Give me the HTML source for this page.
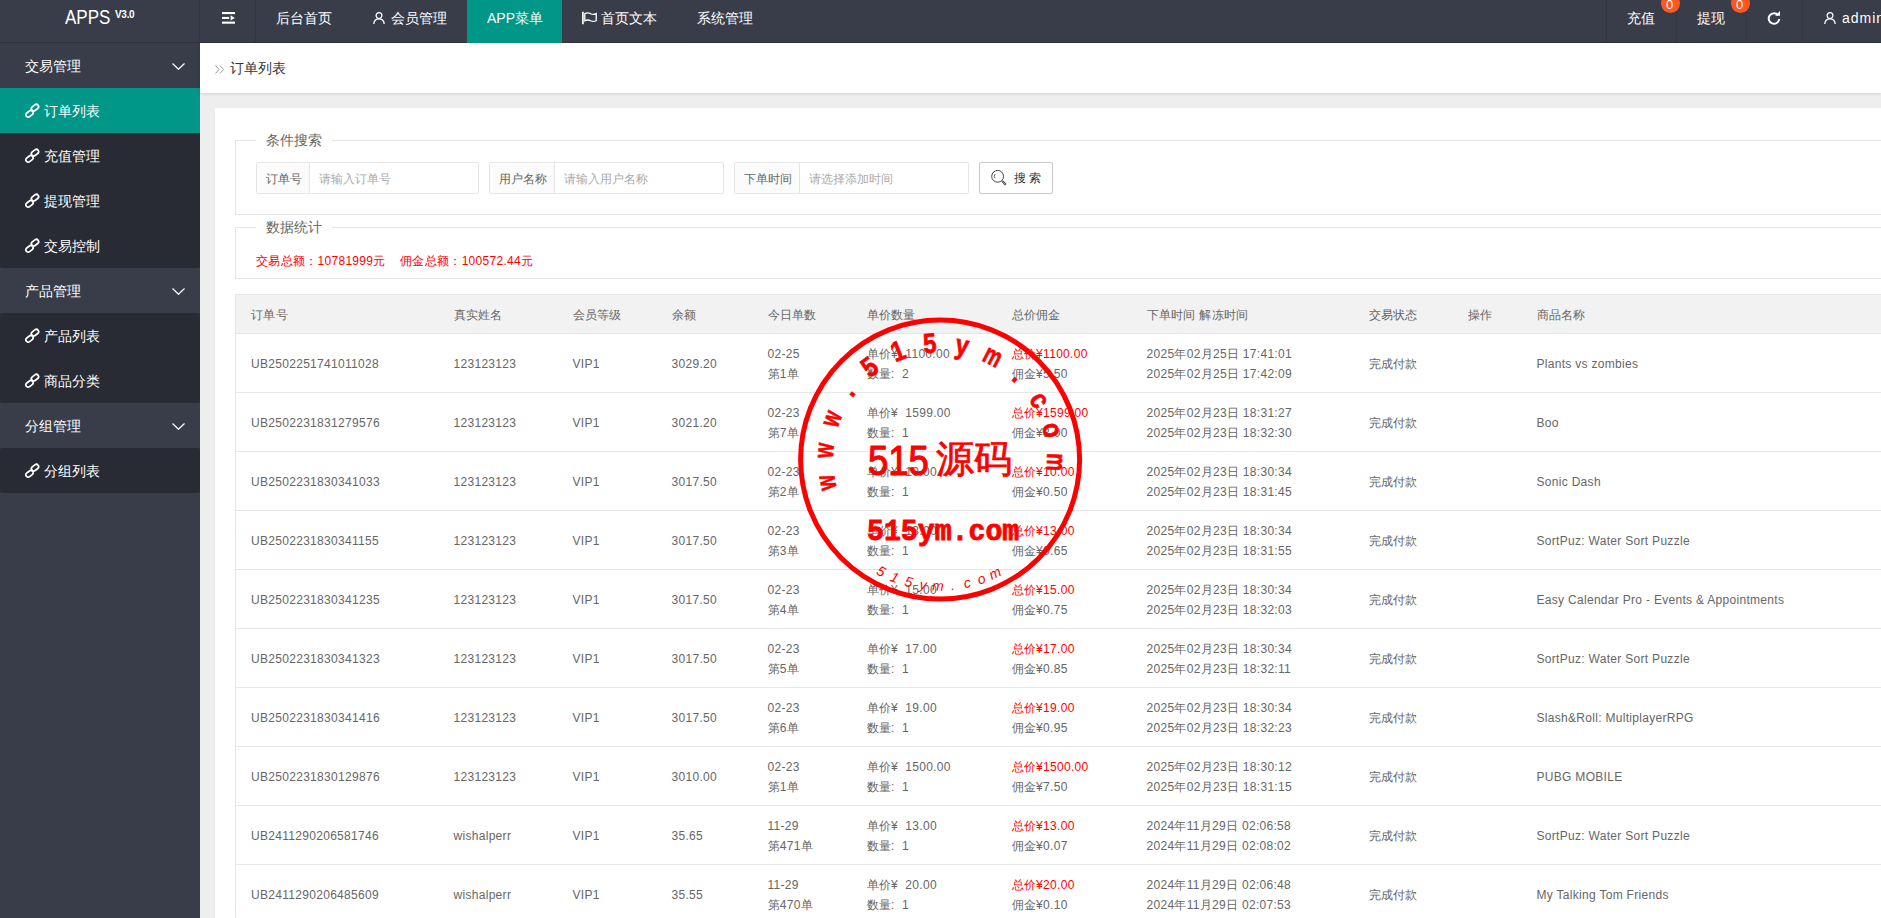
<!DOCTYPE html>
<html><head><meta charset="utf-8">
<style>
*{box-sizing:border-box}
html,body{margin:0;padding:0}
body{width:1881px;height:918px;overflow:hidden;position:relative;background:#eee;font-family:"Liberation Sans",sans-serif;color:#666;font-size:14px}
.abs{position:absolute}
.hdr{left:0;top:0;width:1881px;height:43px;background:#393D49;border-bottom:1px solid #30333D}
.ht{position:absolute;top:-3px;height:42px;line-height:42px;color:#fff;font-size:14px;white-space:nowrap}
.sep{position:absolute;top:0;width:1px;height:42px;background:#33363F}
.side{left:0;top:43px;width:200px;height:875px;background:#393D49}
.grp{position:absolute;left:0;width:200px;height:45px;line-height:45px;color:#fff;font-size:14px}
.grp span{position:absolute;left:25px;top:1px}
.chev{position:absolute;left:172px;top:20px}
.sub{position:absolute;left:0;width:200px;background:#282B33;border-radius:2px}
.it{position:relative;height:45px;line-height:45px;color:#fff;font-size:14px}
.it svg{position:absolute;left:24px;top:14px}
.it span{position:absolute;left:44px;top:1px}
.it.on{background:#009688}
.crumb{left:200px;top:43px;width:1681px;height:50px;background:#fff;box-shadow:0 1px 3px rgba(0,0,0,.12)}
.card{left:215px;top:108px;width:1700px;height:900px;background:#fff;box-shadow:0 1px 2px 0 rgba(0,0,0,.05)}
.fs{position:absolute;border:1px solid #e6e6e6;border-right:none}
.lg{position:absolute;background:#fff;padding:0 10px;font-size:14px;color:#666;line-height:20px}
.ig{position:absolute;top:162px;height:32px;border:1px solid #e6e6e6;border-radius:2px;background:#fff}
.ig .lb{position:absolute;left:0;top:0;white-space:nowrap;height:30px;line-height:32px;padding:0 9px;background:#FBFBFB;border-right:1px solid #e6e6e6;font-size:12px;color:#666;width:53px}
.ig .ph{position:absolute;top:0;height:30px;line-height:32px;font-size:12px;color:#aaa}
.btn{left:979px;top:162px;width:74px;height:32px;border:1px solid #C9C9C9;border-radius:2px;background:#fff}
.red{color:#FF0000}
.tb{position:absolute;left:235px;top:294px;border-collapse:collapse;table-layout:fixed;border:1px solid #e6e6e6;width:1865px}
.tb th{height:39px;background:#F2F2F2;font-weight:normal;text-align:left;padding:0;border-bottom:1px solid #e6e6e6}
.tb td{height:59px;padding:0;border-bottom:1px solid #e6e6e6}
.tb .c{padding:0 15px;font-size:12px;line-height:20px;color:#666;white-space:nowrap;overflow:hidden;letter-spacing:0.3px;position:relative;top:1px}
</style></head><body>
<!-- header -->
<div class="abs hdr"></div>
<div class="ht" style="left:65px;top:-4px;font-size:20px;transform:scaleX(0.85);transform-origin:0 0">APPS</div><div class="ht" style="left:115px;top:-6px;font-size:10px;font-weight:bold;letter-spacing:-0.3px">V3.0</div>
<div class="sep" style="left:199px"></div>
<div class="sep" style="left:255px"></div>
<svg class="abs" style="left:222px;top:12px" width="13" height="12" viewBox="0 0 13 12"><rect x="0" y="0" width="13" height="2.1" fill="#fff"/><rect x="0" y="4.9" width="7.2" height="2.1" fill="#fff"/><rect x="0" y="9.6" width="13" height="2.1" fill="#fff"/><path d="M8.6 3.3 L12.8 5.95 L8.6 8.6Z" fill="#fff"/></svg>
<div class="ht" style="left:276px">后台首页</div>
<svg class="abs" style="left:373px;top:12px" width="12" height="12" viewBox="0 0 12 12"><circle cx="6" cy="3.6" r="2.9" fill="none" stroke="#fff" stroke-width="1.3"/><path d="M0.8 12 C1 8.2 3.2 6.8 6 6.8 C8.8 6.8 11 8.2 11.2 12" fill="none" stroke="#fff" stroke-width="1.3"/></svg>
<div class="ht" style="left:391px">会员管理</div>
<div class="abs" style="left:467px;top:0;width:95px;height:43px;background:#009688"></div>
<div class="ht" style="left:487px">APP菜单</div>
<svg class="abs" style="left:581px;top:11px" width="17" height="14" viewBox="0 0 17 14"><path d="M1.9 0.8 V13.2" stroke="#fff" stroke-width="1.7"/><path d="M3.8 2.7 Q6.8 1.2 9.6 2.7 T15.2 2.6 V9.7 Q12.4 11.2 9.6 9.7 T3.8 9.8 Z" fill="none" stroke="#fff" stroke-width="1.3"/></svg>
<div class="ht" style="left:601px">首页文本</div>
<div class="ht" style="left:697px">系统管理</div>
<div class="sep" style="left:1606px"></div>
<div class="sep" style="left:1676px"></div>
<div class="sep" style="left:1746px"></div>
<div class="sep" style="left:1802px"></div>
<div class="ht" style="left:1627px">充值</div>
<div class="ht" style="left:1697px">提现</div>
<div class="abs" style="left:1661px;top:-6px;width:19px;height:19px;border-radius:50%;background:#FF5722;color:#fff;font-size:12px;line-height:19px;text-align:center;padding-top:3px"></div>
<div class="abs" style="left:1731px;top:-6px;width:19px;height:19px;border-radius:50%;background:#FF5722"></div>
<div class="ht" style="left:1666px;top:-16px;font-size:13px">0</div>
<div class="ht" style="left:1736px;top:-16px;font-size:13px">0</div>
<svg class="abs" style="left:1767px;top:11px" width="14" height="14" viewBox="0 0 14 14"><path d="M11.2 4.2 A5.3 5.3 0 1 0 12.3 8" fill="none" stroke="#fff" stroke-width="2"/><path d="M8.2 4.8 L13 4.8 L13 0 Z" fill="#fff"/></svg>
<svg class="abs" style="left:1824px;top:12px" width="12" height="12" viewBox="0 0 12 12"><circle cx="6" cy="3.6" r="2.9" fill="none" stroke="#fff" stroke-width="1.3"/><path d="M0.8 12 C1 8.2 3.2 6.8 6 6.8 C8.8 6.8 11 8.2 11.2 12" fill="none" stroke="#fff" stroke-width="1.3"/></svg>
<div class="ht" style="left:1842px;letter-spacing:1px">admin</div>

<!-- sidebar -->
<div class="abs side"></div>
<div class="grp" style="top:43px"><span>交易管理</span><svg class="chev" width="13" height="7" viewBox="0 0 13 7"><path d="M0.5 0.5 L6.5 6.3 L12.5 0.5" fill="none" stroke="#fff" stroke-width="1.2"/></svg></div>
<div class="sub" style="top:88px">
 <div class="it on"><svg width="18" height="18" viewBox="0 0 18 18"><g fill="none" stroke="#fff" stroke-width="1.7"><rect x="7.05" y="3.40" width="7.9" height="4.6" rx="2.3" transform="rotate(-38 11.0 5.7)"/><rect x="1.55" y="9.50" width="7.9" height="4.6" rx="2.3" transform="rotate(-38 5.5 11.8)"/></g></svg><span>订单列表</span></div>
 <div class="it"><svg width="18" height="18" viewBox="0 0 18 18"><g fill="none" stroke="#fff" stroke-width="1.7"><rect x="7.05" y="3.40" width="7.9" height="4.6" rx="2.3" transform="rotate(-38 11.0 5.7)"/><rect x="1.55" y="9.50" width="7.9" height="4.6" rx="2.3" transform="rotate(-38 5.5 11.8)"/></g></svg><span>充值管理</span></div>
 <div class="it"><svg width="18" height="18" viewBox="0 0 18 18"><g fill="none" stroke="#fff" stroke-width="1.7"><rect x="7.05" y="3.40" width="7.9" height="4.6" rx="2.3" transform="rotate(-38 11.0 5.7)"/><rect x="1.55" y="9.50" width="7.9" height="4.6" rx="2.3" transform="rotate(-38 5.5 11.8)"/></g></svg><span>提现管理</span></div>
 <div class="it"><svg width="18" height="18" viewBox="0 0 18 18"><g fill="none" stroke="#fff" stroke-width="1.7"><rect x="7.05" y="3.40" width="7.9" height="4.6" rx="2.3" transform="rotate(-38 11.0 5.7)"/><rect x="1.55" y="9.50" width="7.9" height="4.6" rx="2.3" transform="rotate(-38 5.5 11.8)"/></g></svg><span>交易控制</span></div>
</div>
<div class="grp" style="top:268px"><span>产品管理</span><svg class="chev" width="13" height="7" viewBox="0 0 13 7"><path d="M0.5 0.5 L6.5 6.3 L12.5 0.5" fill="none" stroke="#fff" stroke-width="1.2"/></svg></div>
<div class="sub" style="top:313px">
 <div class="it"><svg width="18" height="18" viewBox="0 0 18 18"><g fill="none" stroke="#fff" stroke-width="1.7"><rect x="7.05" y="3.40" width="7.9" height="4.6" rx="2.3" transform="rotate(-38 11.0 5.7)"/><rect x="1.55" y="9.50" width="7.9" height="4.6" rx="2.3" transform="rotate(-38 5.5 11.8)"/></g></svg><span>产品列表</span></div>
 <div class="it"><svg width="18" height="18" viewBox="0 0 18 18"><g fill="none" stroke="#fff" stroke-width="1.7"><rect x="7.05" y="3.40" width="7.9" height="4.6" rx="2.3" transform="rotate(-38 11.0 5.7)"/><rect x="1.55" y="9.50" width="7.9" height="4.6" rx="2.3" transform="rotate(-38 5.5 11.8)"/></g></svg><span>商品分类</span></div>
</div>
<div class="grp" style="top:403px"><span>分组管理</span><svg class="chev" width="13" height="7" viewBox="0 0 13 7"><path d="M0.5 0.5 L6.5 6.3 L12.5 0.5" fill="none" stroke="#fff" stroke-width="1.2"/></svg></div>
<div class="sub" style="top:448px">
 <div class="it"><svg width="18" height="18" viewBox="0 0 18 18"><g fill="none" stroke="#fff" stroke-width="1.7"><rect x="7.05" y="3.40" width="7.9" height="4.6" rx="2.3" transform="rotate(-38 11.0 5.7)"/><rect x="1.55" y="9.50" width="7.9" height="4.6" rx="2.3" transform="rotate(-38 5.5 11.8)"/></g></svg><span>分组列表</span></div>
</div>

<!-- content -->
<div class="abs crumb"></div>
<svg class="abs" style="left:215px;top:65px" width="10" height="9" viewBox="0 0 10 9"><path d="M0.5 0.5 L4 4.5 L0.5 8.5 M5 0.5 L8.5 4.5 L5 8.5" fill="none" stroke="#999" stroke-width="1"/></svg>
<div class="abs" style="left:230px;top:58px;font-size:14px;line-height:20px;color:#333">订单列表</div>
<div class="abs card"></div>

<div class="fs" style="left:235px;top:140px;width:1700px;height:75px"></div>
<div class="lg" style="left:256px;top:130px">条件搜索</div>
<div class="ig" style="left:256px;width:223px"><div class="lb">订单号</div><div class="ph" style="left:62px">请输入订单号</div></div>
<div class="ig" style="left:489px;width:235px"><div class="lb" style="width:65px">用户名称</div><div class="ph" style="left:74px">请输入用户名称</div></div>
<div class="ig" style="left:734px;width:235px"><div class="lb" style="width:65px">下单时间</div><div class="ph" style="left:74px">请选择添加时间</div></div>
<div class="abs btn"></div>
<svg class="abs" style="left:990px;top:169px" width="18" height="18" viewBox="0 0 18 18"><circle cx="7.6" cy="7.3" r="5.9" fill="none" stroke="#333" stroke-width="0.9"/><path d="M5 5.3 A3.2 3.2 0 0 0 5 9.3" fill="none" stroke="#333" stroke-width="0.8"/><path d="M12.2 12 L15.8 15.8" stroke="#333" stroke-width="2"/><path d="M12.6 12.4 L15.4 15.4" stroke="#fff" stroke-width="0.6"/></svg>
<div class="abs" style="left:1014px;top:168px;font-size:12px;line-height:20px;color:#333">搜 索</div>

<div class="fs" style="left:235px;top:227px;width:1700px;height:52px"></div>
<div class="lg" style="left:256px;top:217px">数据统计</div>
<div class="abs red" style="left:256px;top:251px;font-size:12px;line-height:20px;white-space:nowrap;letter-spacing:0.3px">交易总额：10781999元&nbsp;&nbsp;&nbsp;&nbsp;佣金总额：100572.44元</div>

<table class="tb"><colgroup><col style="width:203px"><col style="width:119px"><col style="width:99px"><col style="width:96px"><col style="width:99px"><col style="width:145px"><col style="width:135px"><col style="width:222px"><col style="width:99px"><col style="width:69px"><col style="width:578px"></colgroup>
<thead><tr><th><div class="c">订单号</div></th><th><div class="c">真实姓名</div></th><th><div class="c">会员等级</div></th><th><div class="c">余额</div></th><th><div class="c">今日单数</div></th><th><div class="c">单价数量</div></th><th><div class="c">总价佣金</div></th><th><div class="c">下单时间 解冻时间</div></th><th><div class="c">交易状态</div></th><th><div class="c">操作</div></th><th><div class="c">商品名称</div></th></tr></thead><tbody>
<tr><td><div class="c">UB2502251741011028</div></td><td><div class="c">123123123</div></td><td><div class="c">VIP1</div></td><td><div class="c">3029.20</div></td><td><div class="c">02-25<br>第1单</div></td><td><div class="c">单价¥&nbsp; 1100.00<br>数量:&nbsp;&nbsp;2</div></td><td><div class="c"><span class="red">总价¥1100.00</span><br>佣金¥5.50</div></td><td><div class="c">2025年02月25日 17:41:01<br>2025年02月25日 17:42:09</div></td><td><div class="c">完成付款</div></td><td><div class="c"></div></td><td><div class="c">Plants vs zombies</div></td></tr>
<tr><td><div class="c">UB2502231831279576</div></td><td><div class="c">123123123</div></td><td><div class="c">VIP1</div></td><td><div class="c">3021.20</div></td><td><div class="c">02-23<br>第7单</div></td><td><div class="c">单价¥&nbsp; 1599.00<br>数量:&nbsp;&nbsp;1</div></td><td><div class="c"><span class="red">总价¥1599.00</span><br>佣金¥8.00</div></td><td><div class="c">2025年02月23日 18:31:27<br>2025年02月23日 18:32:30</div></td><td><div class="c">完成付款</div></td><td><div class="c"></div></td><td><div class="c">Boo</div></td></tr>
<tr><td><div class="c">UB2502231830341033</div></td><td><div class="c">123123123</div></td><td><div class="c">VIP1</div></td><td><div class="c">3017.50</div></td><td><div class="c">02-23<br>第2单</div></td><td><div class="c">单价¥&nbsp; 10.00<br>数量:&nbsp;&nbsp;1</div></td><td><div class="c"><span class="red">总价¥10.00</span><br>佣金¥0.50</div></td><td><div class="c">2025年02月23日 18:30:34<br>2025年02月23日 18:31:45</div></td><td><div class="c">完成付款</div></td><td><div class="c"></div></td><td><div class="c">Sonic Dash</div></td></tr>
<tr><td><div class="c">UB2502231830341155</div></td><td><div class="c">123123123</div></td><td><div class="c">VIP1</div></td><td><div class="c">3017.50</div></td><td><div class="c">02-23<br>第3单</div></td><td><div class="c">单价¥&nbsp; 13.00<br>数量:&nbsp;&nbsp;1</div></td><td><div class="c"><span class="red">总价¥13.00</span><br>佣金¥0.65</div></td><td><div class="c">2025年02月23日 18:30:34<br>2025年02月23日 18:31:55</div></td><td><div class="c">完成付款</div></td><td><div class="c"></div></td><td><div class="c">SortPuz: Water Sort Puzzle</div></td></tr>
<tr><td><div class="c">UB2502231830341235</div></td><td><div class="c">123123123</div></td><td><div class="c">VIP1</div></td><td><div class="c">3017.50</div></td><td><div class="c">02-23<br>第4单</div></td><td><div class="c">单价¥&nbsp; 15.00<br>数量:&nbsp;&nbsp;1</div></td><td><div class="c"><span class="red">总价¥15.00</span><br>佣金¥0.75</div></td><td><div class="c">2025年02月23日 18:30:34<br>2025年02月23日 18:32:03</div></td><td><div class="c">完成付款</div></td><td><div class="c"></div></td><td><div class="c">Easy Calendar Pro - Events &amp; Appointments</div></td></tr>
<tr><td><div class="c">UB2502231830341323</div></td><td><div class="c">123123123</div></td><td><div class="c">VIP1</div></td><td><div class="c">3017.50</div></td><td><div class="c">02-23<br>第5单</div></td><td><div class="c">单价¥&nbsp; 17.00<br>数量:&nbsp;&nbsp;1</div></td><td><div class="c"><span class="red">总价¥17.00</span><br>佣金¥0.85</div></td><td><div class="c">2025年02月23日 18:30:34<br>2025年02月23日 18:32:11</div></td><td><div class="c">完成付款</div></td><td><div class="c"></div></td><td><div class="c">SortPuz: Water Sort Puzzle</div></td></tr>
<tr><td><div class="c">UB2502231830341416</div></td><td><div class="c">123123123</div></td><td><div class="c">VIP1</div></td><td><div class="c">3017.50</div></td><td><div class="c">02-23<br>第6单</div></td><td><div class="c">单价¥&nbsp; 19.00<br>数量:&nbsp;&nbsp;1</div></td><td><div class="c"><span class="red">总价¥19.00</span><br>佣金¥0.95</div></td><td><div class="c">2025年02月23日 18:30:34<br>2025年02月23日 18:32:23</div></td><td><div class="c">完成付款</div></td><td><div class="c"></div></td><td><div class="c">Slash&amp;Roll: MultiplayerRPG</div></td></tr>
<tr><td><div class="c">UB2502231830129876</div></td><td><div class="c">123123123</div></td><td><div class="c">VIP1</div></td><td><div class="c">3010.00</div></td><td><div class="c">02-23<br>第1单</div></td><td><div class="c">单价¥&nbsp; 1500.00<br>数量:&nbsp;&nbsp;1</div></td><td><div class="c"><span class="red">总价¥1500.00</span><br>佣金¥7.50</div></td><td><div class="c">2025年02月23日 18:30:12<br>2025年02月23日 18:31:15</div></td><td><div class="c">完成付款</div></td><td><div class="c"></div></td><td><div class="c">PUBG MOBILE</div></td></tr>
<tr><td><div class="c">UB2411290206581746</div></td><td><div class="c">wishalperr</div></td><td><div class="c">VIP1</div></td><td><div class="c">35.65</div></td><td><div class="c">11-29<br>第471单</div></td><td><div class="c">单价¥&nbsp; 13.00<br>数量:&nbsp;&nbsp;1</div></td><td><div class="c"><span class="red">总价¥13.00</span><br>佣金¥0.07</div></td><td><div class="c">2024年11月29日 02:06:58<br>2024年11月29日 02:08:02</div></td><td><div class="c">完成付款</div></td><td><div class="c"></div></td><td><div class="c">SortPuz: Water Sort Puzzle</div></td></tr>
<tr><td><div class="c">UB2411290206485609</div></td><td><div class="c">wishalperr</div></td><td><div class="c">VIP1</div></td><td><div class="c">35.55</div></td><td><div class="c">11-29<br>第470单</div></td><td><div class="c">单价¥&nbsp; 20.00<br>数量:&nbsp;&nbsp;1</div></td><td><div class="c"><span class="red">总价¥20.00</span><br>佣金¥0.10</div></td><td><div class="c">2024年11月29日 02:06:48<br>2024年11月29日 02:07:53</div></td><td><div class="c">完成付款</div></td><td><div class="c"></div></td><td><div class="c">My Talking Tom Friends</div></td></tr>
</tbody></table>
<svg class="abs" style="left:790px;top:309px;overflow:visible" width="300" height="300" viewBox="0 0 300 300">
<circle cx="150.10000000000002" cy="150.60000000000002" r="139.5" fill="none" stroke="#f00" stroke-width="5"/>
<text x="0" y="0" transform="translate(45.25,171.93) rotate(258.50) scale(0.68,1)" text-anchor="middle" font-family="Liberation Sans" font-weight="bold" font-size="28" fill="#f00" stroke="#f00" stroke-width="0.7">w</text>
<text x="0" y="0" transform="translate(43.44,142.09) rotate(274.56) scale(0.68,1)" text-anchor="middle" font-family="Liberation Sans" font-weight="bold" font-size="28" fill="#f00" stroke="#f00" stroke-width="0.7">w</text>
<text x="0" y="0" transform="translate(49.95,112.92) rotate(290.62) scale(0.68,1)" text-anchor="middle" font-family="Liberation Sans" font-weight="bold" font-size="28" fill="#f00" stroke="#f00" stroke-width="0.7">w</text>
<text x="0" y="0" transform="translate(64.29,86.68) rotate(306.68) scale(0.85,1)" text-anchor="middle" font-family="Liberation Sans" font-weight="bold" font-size="28" fill="#f00" stroke="#f00" stroke-width="0.7">.</text>
<text x="0" y="0" transform="translate(85.32,65.44) rotate(322.74) scale(0.85,1)" text-anchor="middle" font-family="Liberation Sans" font-weight="bold" font-size="28" fill="#f00" stroke="#f00" stroke-width="0.7">5</text>
<text x="0" y="0" transform="translate(111.41,50.84) rotate(338.80) scale(0.85,1)" text-anchor="middle" font-family="Liberation Sans" font-weight="bold" font-size="28" fill="#f00" stroke="#f00" stroke-width="0.7">1</text>
<text x="0" y="0" transform="translate(140.51,44.03) rotate(354.86) scale(0.85,1)" text-anchor="middle" font-family="Liberation Sans" font-weight="bold" font-size="28" fill="#f00" stroke="#f00" stroke-width="0.7">5</text>
<text x="0" y="0" transform="translate(170.37,45.54) rotate(370.92) scale(0.85,1)" text-anchor="middle" font-family="Liberation Sans" font-weight="bold" font-size="28" fill="#f00" stroke="#f00" stroke-width="0.7">y</text>
<text x="0" y="0" transform="translate(198.64,55.25) rotate(386.98) scale(0.7,1)" text-anchor="middle" font-family="Liberation Sans" font-weight="bold" font-size="28" fill="#f00" stroke="#f00" stroke-width="0.7">m</text>
<text x="0" y="0" transform="translate(223.13,72.40) rotate(403.04) scale(0.85,1)" text-anchor="middle" font-family="Liberation Sans" font-weight="bold" font-size="28" fill="#f00" stroke="#f00" stroke-width="0.7">.</text>
<text x="0" y="0" transform="translate(241.91,95.65) rotate(419.10) scale(0.85,1)" text-anchor="middle" font-family="Liberation Sans" font-weight="bold" font-size="28" fill="#f00" stroke="#f00" stroke-width="0.7">c</text>
<text x="0" y="0" transform="translate(253.53,123.20) rotate(435.16) scale(0.85,1)" text-anchor="middle" font-family="Liberation Sans" font-weight="bold" font-size="28" fill="#f00" stroke="#f00" stroke-width="0.7">o</text>
<text x="0" y="0" transform="translate(257.08,152.88) rotate(451.22) scale(0.7,1)" text-anchor="middle" font-family="Liberation Sans" font-weight="bold" font-size="28" fill="#f00" stroke="#f00" stroke-width="0.7">m</text>
<text x="0" y="0" transform="translate(89.00,266.48) rotate(27.80)" text-anchor="middle" font-family="Liberation Sans" font-style="italic" font-size="14" fill="#f00">5</text>
<text x="0" y="0" transform="translate(102.94,272.82) rotate(21.10)" text-anchor="middle" font-family="Liberation Sans" font-style="italic" font-size="14" fill="#f00">1</text>
<text x="0" y="0" transform="translate(117.52,277.48) rotate(14.40)" text-anchor="middle" font-family="Liberation Sans" font-style="italic" font-size="14" fill="#f00">5</text>
<text x="0" y="0" transform="translate(132.55,280.42) rotate(7.70)" text-anchor="middle" font-family="Liberation Sans" font-style="italic" font-size="14" fill="#f00">y</text>
<text x="0" y="0" transform="translate(147.81,281.58) rotate(1.00)" text-anchor="middle" font-family="Liberation Sans" font-style="italic" font-size="14" fill="#f00">m</text>
<text x="0" y="0" transform="translate(163.11,280.95) rotate(-5.70)" text-anchor="middle" font-family="Liberation Sans" font-style="italic" font-size="14" fill="#f00">.</text>
<text x="0" y="0" transform="translate(178.23,278.54) rotate(-12.40)" text-anchor="middle" font-family="Liberation Sans" font-style="italic" font-size="14" fill="#f00">c</text>
<text x="0" y="0" transform="translate(192.97,274.39) rotate(-19.10)" text-anchor="middle" font-family="Liberation Sans" font-style="italic" font-size="14" fill="#f00">o</text>
<text x="0" y="0" transform="translate(207.12,268.54) rotate(-25.80)" text-anchor="middle" font-family="Liberation Sans" font-style="italic" font-size="14" fill="#f00">m</text>
<text transform="translate(77.89999999999998,166.2) scale(0.87,1)" x="0" y="0" font-family="Liberation Sans" font-size="42" fill="#f00" stroke="#f00" stroke-width="1.2">515</text>
<text x="146" y="163" font-family="Liberation Serif" font-size="38" fill="#f00" stroke="#f00" stroke-width="0.8" transform="skewX(0)">源码</text>
<text transform="translate(77,230.5) scale(0.94,1)" x="0" y="0" font-family="Liberation Mono" font-weight="bold" font-size="30" fill="#f00" stroke="#f00" stroke-width="0.9">515ym.com</text>
</svg>

</body></html>
